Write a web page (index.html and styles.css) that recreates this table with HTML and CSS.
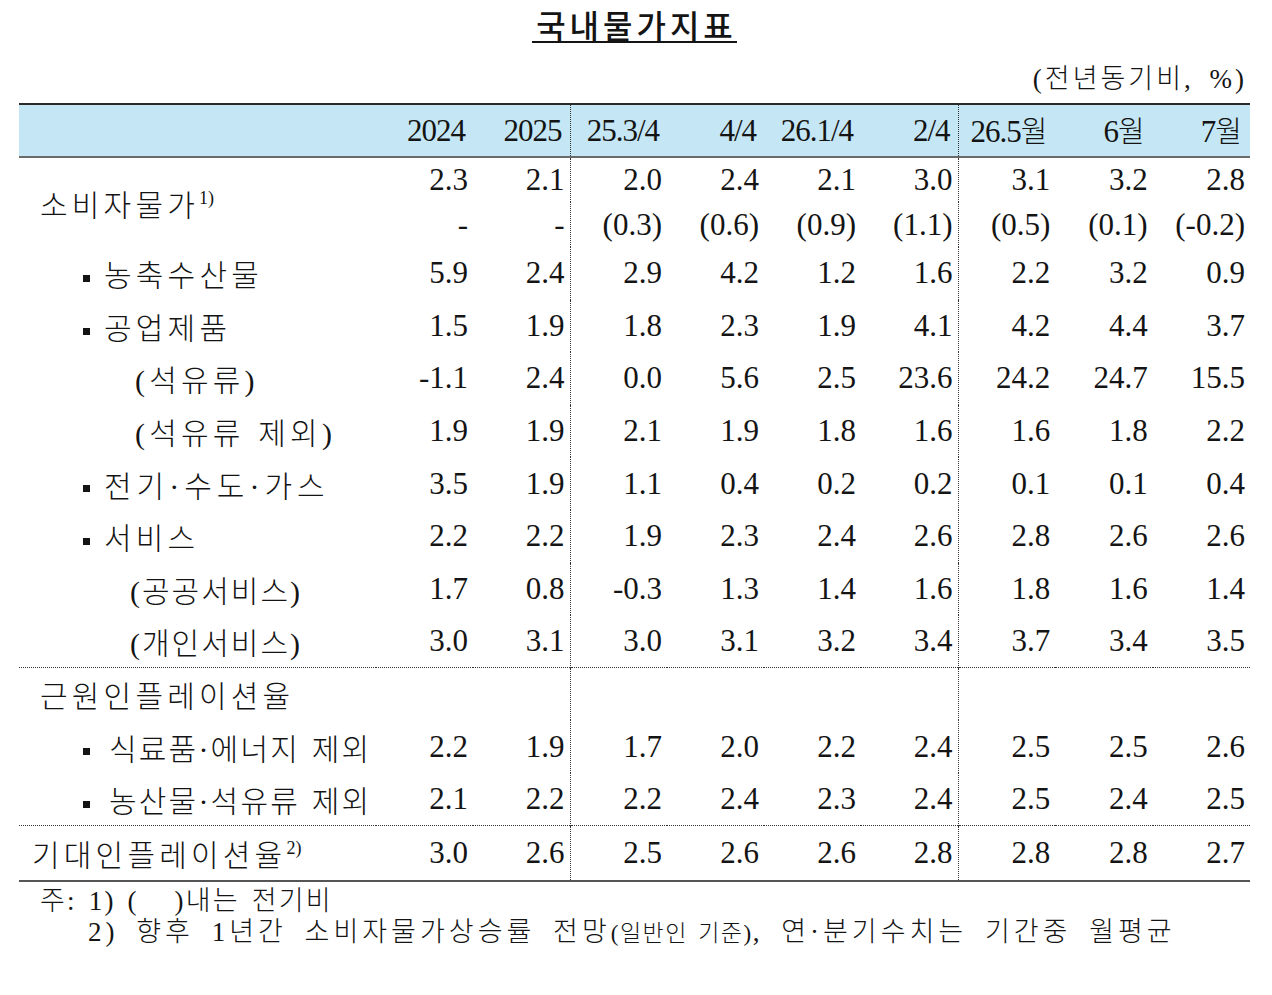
FILE: index.html
```html
<!DOCTYPE html>
<html lang="ko">
<head>
<meta charset="utf-8">
<title>국내물가지표</title>
<link rel="stylesheet" href="styles.css">
</head>
<body>
<div class="page">
  <h1 class="title"><span>국내물가지표</span></h1>
  <div class="unit">(전년동기비, %)</div>
  <table class="cpi">
    <colgroup>
      <col class="c-label">
      <col class="c-num"><col class="c-num"><col class="c-num"><col class="c-num"><col class="c-num"><col class="c-num">
      <col class="c-num3"><col class="c-num3"><col class="c-num3">
    </colgroup>
    <thead>
      <tr>
        <th class="lbl"></th>
        <th>2024</th><th class="sep">2025</th>
        <th>25.3/4</th><th>4/4</th><th>26.1/4</th><th class="sep">2/4</th>
        <th>26.5<span class="ko">월</span></th><th><span>6</span><span class="ko">월</span></th><th><span>7</span><span class="ko">월</span></th>
      </tr>
    </thead>
    <tbody>
      <tr class="half">
        <td class="lbl l0" rowspan="2">소비자물가<sup>1)</sup></td>
        <td>2.3</td><td class="sep">2.1</td>
        <td>2.0</td><td>2.4</td><td>2.1</td><td class="sep">3.0</td>
        <td>3.1</td><td>3.2</td><td>2.8</td>
      </tr>
      <tr class="half">
        <td>-</td><td class="sep">-</td>
        <td>(0.3)</td><td>(0.6)</td><td>(0.9)</td><td class="sep">(1.1)</td>
        <td>(0.5)</td><td>(0.1)</td><td>(-0.2)</td>
      </tr>
      <tr>
        <td class="lbl l1"><i class="dot"></i>농축수산물</td>
        <td>5.9</td><td class="sep">2.4</td>
        <td>2.9</td><td>4.2</td><td>1.2</td><td class="sep">1.6</td>
        <td>2.2</td><td>3.2</td><td>0.9</td>
      </tr>
      <tr>
        <td class="lbl l1"><i class="dot"></i>공업제품</td>
        <td>1.5</td><td class="sep">1.9</td>
        <td>1.8</td><td>2.3</td><td>1.9</td><td class="sep">4.1</td>
        <td>4.2</td><td>4.4</td><td>3.7</td>
      </tr>
      <tr>
        <td class="lbl l2">(석유류)</td>
        <td>-1.1</td><td class="sep">2.4</td>
        <td>0.0</td><td>5.6</td><td>2.5</td><td class="sep">23.6</td>
        <td>24.2</td><td>24.7</td><td>15.5</td>
      </tr>
      <tr>
        <td class="lbl l2">(석유류 제외)</td>
        <td>1.9</td><td class="sep">1.9</td>
        <td>2.1</td><td>1.9</td><td>1.8</td><td class="sep">1.6</td>
        <td>1.6</td><td>1.8</td><td>2.2</td>
      </tr>
      <tr>
        <td class="lbl l1 wide-dot"><i class="dot"></i>전기·수도·가스</td>
        <td>3.5</td><td class="sep">1.9</td>
        <td>1.1</td><td>0.4</td><td>0.2</td><td class="sep">0.2</td>
        <td>0.1</td><td>0.1</td><td>0.4</td>
      </tr>
      <tr>
        <td class="lbl l1"><i class="dot"></i>서비스</td>
        <td>2.2</td><td class="sep">2.2</td>
        <td>1.9</td><td>2.3</td><td>2.4</td><td class="sep">2.6</td>
        <td>2.8</td><td>2.6</td><td>2.6</td>
      </tr>
      <tr>
        <td class="lbl l3">(공공서비스)</td>
        <td>1.7</td><td class="sep">0.8</td>
        <td>-0.3</td><td>1.3</td><td>1.4</td><td class="sep">1.6</td>
        <td>1.8</td><td>1.6</td><td>1.4</td>
      </tr>
      <tr>
        <td class="lbl l3">(개인서비스)</td>
        <td>3.0</td><td class="sep">3.1</td>
        <td>3.0</td><td>3.1</td><td>3.2</td><td class="sep">3.4</td>
        <td>3.7</td><td>3.4</td><td>3.5</td>
      </tr>
      <tr class="grp">
        <td class="lbl l0">근원인플레이션율</td>
        <td></td><td class="sep"></td>
        <td></td><td></td><td></td><td class="sep"></td>
        <td></td><td></td><td></td>
      </tr>
      <tr>
        <td class="lbl l1b"><i class="dot"></i>식료품·에너지 제외</td>
        <td>2.2</td><td class="sep">1.9</td>
        <td>1.7</td><td>2.0</td><td>2.2</td><td class="sep">2.4</td>
        <td>2.5</td><td>2.5</td><td>2.6</td>
      </tr>
      <tr>
        <td class="lbl l1b"><i class="dot"></i>농산물·석유류 제외</td>
        <td>2.1</td><td class="sep">2.2</td>
        <td>2.2</td><td>2.4</td><td>2.3</td><td class="sep">2.4</td>
        <td>2.5</td><td>2.4</td><td>2.5</td>
      </tr>
      <tr class="grp last">
        <td class="lbl lx">기대인플레이션율<sup>2)</sup></td>
        <td>3.0</td><td class="sep">2.6</td>
        <td>2.5</td><td>2.6</td><td>2.6</td><td class="sep">2.8</td>
        <td>2.8</td><td>2.8</td><td>2.7</td>
      </tr>
    </tbody>
  </table>
  <div class="notes">
    <p class="n1">주: 1) (&nbsp;&nbsp;&nbsp;)내는 전기비</p>
    <p class="n2">2) 향후 1년간 소비자물가상승률 전망<span class="sm">(일반인 기준)</span>, 연·분기수치는 기간중 월평균</p>
  </div>
</div>
</body>
</html>
```

FILE: styles.css
```css
html, body {
  margin: 0;
  padding: 0;
  background: #ffffff;
}

body {
  font-family: "Liberation Serif", "Noto Sans CJK KR", serif;
  color: #141414;
}

.page {
  width: 1231px;
  padding: 7px 0 0 19px;
}

.title {
  margin: 0;
  text-align: center;
  font-family: "Noto Sans CJK KR", sans-serif;
  font-size: 32px;
  font-weight: 500;
  line-height: 34px;
  letter-spacing: 4px;
}

.title span {
  display: inline-block;
  border-bottom: 2px solid #141414;
  padding-left: 4px;
}

.unit {
  margin-top: 19px;
  text-align: right;
  padding-right: 3px;
  font-family: "Liberation Serif", "Noto Sans CJK KR", serif;
  font-size: 27px;
  line-height: 34px;
  letter-spacing: 3px;
  word-spacing: 6px;
  font-weight: 300;
}

.cpi {
  margin-top: 7px;
  width: 1231px;
  table-layout: fixed;
  border-collapse: collapse;
}

.c-label { width: 357px; }
.c-num { width: 97px; }
.c-num3 { width: 97.33px; }

.cpi th,
.cpi td {
  padding: 0 5px 0 0;
  text-align: right;
  font-size: 31px;
  font-weight: 400;
  white-space: nowrap;
  vertical-align: middle;
}

.cpi thead th {
  height: 48px;
  padding-right: 8px;
  background: #c5e7f5;
  border-top: 2px solid #2a2a2a;
  border-bottom: 2px solid #6b6b6b;
  letter-spacing: -1px;
  line-height: 48px;
}

.cpi thead th .ko {
  font-family: "Noto Sans CJK KR", sans-serif;
  font-size: 29px;
  font-weight: 300;
  letter-spacing: 0;
}

.cpi .sep {
  border-right: 1px dotted #333;
}

.cpi tbody tr { height: 52.6px; }
.cpi tbody tr.half { height: 45px; }

.cpi tr.grp td {
  border-top: 1px dotted #333;
}

.cpi tr.last td {
  height: 54px;
  border-bottom: 2px solid #555;
}

.cpi .lbl {
  text-align: left;
  padding-right: 0;
  font-family: "Liberation Serif", "Noto Sans CJK KR", serif;
  font-size: 30px;
  font-weight: 300;
  letter-spacing: 4.2px;
  word-spacing: 2px;
}

.cpi .lbl sup {
  font-family: "Liberation Serif", serif;
  font-size: 18px;
  font-weight: 400;
  letter-spacing: 0;
  vertical-align: 0;
  position: relative;
  top: -12px;
}

.cpi .l0 { padding-left: 21px; }
.cpi .lx { padding-left: 13px; }
.cpi .l1 { padding-left: 64px; }
.cpi .l1b { padding-left: 64px; letter-spacing: 2.2px; }
.cpi .l2 { padding-left: 116px; }
.cpi .l3 { padding-left: 111px; letter-spacing: 2px; }
.cpi .wide-dot { letter-spacing: 5px; }

.dot {
  display: inline-block;
  width: 7px;
  height: 7px;
  background: #141414;
  vertical-align: middle;
  margin-right: 14px;
  position: relative;
  top: -1px;
}

.l1b .dot { margin-right: 19px; }

.notes {
  padding-top: 4px;
  font-family: "Liberation Serif", "Noto Sans CJK KR", serif;
  font-size: 27px;
  font-weight: 300;
}

.notes p {
  margin: 0;
  line-height: 31px;
}

.n1 {
  padding-left: 21px;
  letter-spacing: 2.2px;
  word-spacing: 3px;
}

.n2 {
  padding-left: 69px;
  letter-spacing: 4px;
  word-spacing: 7px;
}

.notes .sm {
  font-size: 23px;
  letter-spacing: 1.5px;
  word-spacing: 3px;
}
```
